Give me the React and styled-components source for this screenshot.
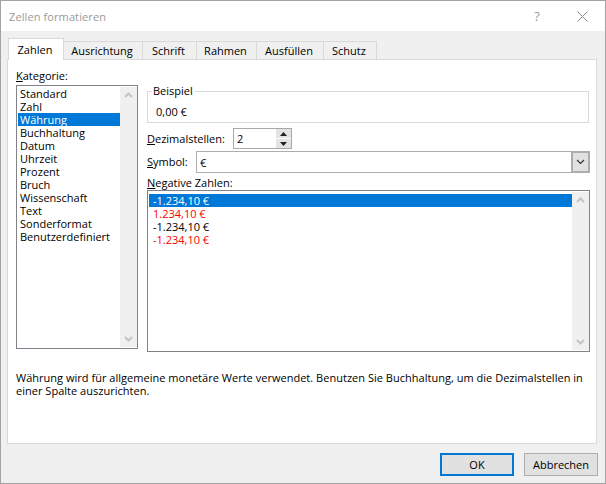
import React from "react";
import styled, { createGlobalStyle } from "styled-components";

const Global = createGlobalStyle`
  html, body { margin: 0; padding: 0; background: #f0f0f0; }
  * { box-sizing: border-box; }
`;

const Dialog = styled.div`
  width: 606px;
  height: 484px;
  display: flex;
  flex-direction: column;
  background: #f0f0f0;
  border: 1px solid #a3a3a3;
  font-family: "Open Sans", "Liberation Sans", sans-serif;
  font-size: 11px;
  color: #000;
  overflow: hidden;
`;

const TitleBar = styled.div`
  height: 30px;
  flex: none;
  background: #fff;
  display: flex;
  align-items: center;
  padding-left: 8px;
  color: #9a9a9a;
`;

const Title = styled.span`
  flex: 1;
  letter-spacing: 0.1px;
`;

const TitleButton = styled.div`
  width: 20px;
  margin-right: ${(p) => p.$gap}px;
  display: flex;
  justify-content: center;
  font-size: 13px;
  color: #9a9a9a;
`;

const TabRow = styled.div`
  flex: none;
  height: 28px;
  padding: 7px 0 0 7px;
  display: flex;
  align-items: flex-end;
  position: relative;
  z-index: 1;
`;

const Tab = styled.div`
  width: ${(p) => p.$w}px;
  height: ${(p) => (p.$active ? 22 : 18)}px;
  margin-bottom: ${(p) => (p.$active ? -1 : 0)}px;
  margin-left: ${(p) => (p.$first ? 0 : -1)}px;
  padding: 0 2px 1px 0;
  background: ${(p) => (p.$active ? "#fff" : "#f0f0f0")};
  border: 1px solid #d9d9d9;
  border-bottom: none;
  display: flex;
  align-items: center;
  justify-content: center;
`;

const Panel = styled.div`
  width: 590px;
  height: 385px;
  margin-left: 6px;
  flex: none;
  background: #fff;
  border: 1px solid #d9d9d9;
  padding: 8px 6px 0 8px;
  display: flex;
  flex-direction: column;
`;

const Columns = styled.div`
  display: flex;
  gap: 9px;
  height: 284px;
  flex: none;
`;

const LeftColumn = styled.div`
  width: 122px;
  flex: none;
  display: flex;
  flex-direction: column;
  padding-bottom: 3px;
`;

const RightColumn = styled.div`
  flex: 1;
  padding-top: 16px;
  display: flex;
  flex-direction: column;
`;

const Label = styled.div`
  line-height: 16px;
  height: ${(p) => p.$h || 16}px;
  padding-top: ${(p) => p.$top || 0}px;
  white-space: nowrap;

  u {
    text-decoration: underline;
    text-underline-offset: 1px;
  }
`;

const ListBox = styled.div`
  flex: ${(p) => (p.$grow ? 1 : "none")};
  height: ${(p) => (p.$h ? `${p.$h}px` : "auto")};
  border: 1px solid #82828a;
  background: #fff;
  display: flex;
  padding: 1px 0 1px 1px;
  min-height: 0;
`;

const Items = styled.div`
  flex: 1;
  padding-top: ${(p) => p.$top}px;
`;

const Item = styled.div`
  height: 13px;
  line-height: 13px;
  padding-left: ${(p) => p.$indent}px;
  white-space: nowrap;
  background: ${(p) => (p.$selected ? "#0078d7" : "transparent")};
  color: ${(p) => (p.$selected ? "#fff" : p.$red ? "#f00" : "#000")};
`;

const ScrollBar = styled.div`
  width: 17px;
  flex: none;
  background: #f0f0f0;
  display: flex;
  flex-direction: column;
  justify-content: space-between;
  align-items: center;
  padding: 5px 0;
`;

const Example = styled.fieldset`
  margin: 0;
  padding: 0 0 0 8px;
  height: 39px;
  width: 442px;
  flex: none;
  border: 1px solid #d9d9d9;

  legend {
    padding: 0 2px 0 1px;
    margin-left: -4px;
    line-height: 14px;
  }
`;

const ExampleValue = styled.div`
  line-height: 16px;
  margin-top: 6px;
`;

const Row = styled.div`
  display: flex;
  align-items: center;
  height: ${(p) => p.$h}px;
  flex: none;
  padding-top: ${(p) => p.$top || 0}px;
`;

const SpinBox = styled.div`
  width: 59px;
  height: 21px;
  margin-left: 8px;
  border: 1px solid #a9a9a9;
  display: flex;
  align-items: center;
  padding-left: 3px;
`;

const SpinValue = styled.span`
  flex: 1;
`;

const SpinButtons = styled.div`
  width: 15px;
  height: 19px;
  display: flex;
  flex-direction: column;
  gap: 1px;
`;

const SpinButton = styled.div`
  flex: 1;
  background: #e4e4e4;
  display: flex;
  align-items: center;
  justify-content: center;
`;

const Select = styled.div`
  width: 394px;
  height: 22px;
  margin-left: auto;
  border: 1px solid #adadad;
  display: flex;
  align-items: center;
  padding-left: 3px;
`;

const SelectValue = styled.span`
  flex: 1;
`;

const SelectArrow = styled.div`
  width: 18px;
  height: 20px;
  background: #e1e1e1;
  border: 1px solid #adadad;
  border-left-width: 2px;
  display: flex;
  align-items: center;
  justify-content: center;
`;

const Description = styled.div`
  margin-top: 19px;
  line-height: 13px;
  width: 574px;
  letter-spacing: 0.02px;
`;

const Footer = styled.div`
  flex: 1;
  display: flex;
  justify-content: flex-end;
  gap: 10px;
  padding: 9px 7px 0 0;
`;

const Button = styled.div`
  width: 74px;
  height: 23px;
  background: #e1e1e1;
  border: ${(p) => (p.$primary ? "2px solid #0078d7" : "1px solid #adadad")};
  display: flex;
  align-items: center;
  justify-content: center;
`;

const Chevron = ({ up, color = "#c4c4c4", sw = 2 }) => (
  <svg width="9" height="6" viewBox="0 0 9 6">
    <path d={up ? "M1 5 L4.5 1.5 L8 5" : "M1 1 L4.5 4.5 L8 1"} fill="none" stroke={color} strokeWidth={sw} />
  </svg>
);

const Triangle = ({ up }) => (
  <svg width="7" height="4" viewBox="0 0 7 4">
    <path d={up ? "M3.5 0 L7 4 L0 4 Z" : "M0 0 L7 0 L3.5 4 Z"} fill="#222" />
  </svg>
);

const tabs = [
  ["Zahlen", 56],
  ["Ausrichtung", 80],
  ["Schrift", 55],
  ["Rahmen", 61],
  ["Ausfüllen", 68],
  ["Schutz", 54],
];

const categories = [
  "Standard", "Zahl", "Währung", "Buchhaltung", "Datum", "Uhrzeit", "Prozent",
  "Bruch", "Wissenschaft", "Text", "Sonderformat", "Benutzerdefiniert",
];

const negatives = [
  { text: "-1.234,10 €", selected: true },
  { text: "1.234,10 €", red: true },
  { text: "-1.234,10 €" },
  { text: "-1.234,10 €", red: true },
];

const App = () => (
  <>
    <Global />
    <Dialog>
      <TitleBar>
        <Title>Zellen formatieren</Title>
        <TitleButton $gap={25}>?</TitleButton>
        <TitleButton $gap={13}>
          <svg width="11" height="11" viewBox="0 0 11 11">
            <path d="M0.5 0.5 L10.5 10.5 M10.5 0.5 L0.5 10.5" stroke="#8a8a8a" strokeWidth="1" fill="none" />
          </svg>
        </TitleButton>
      </TitleBar>
      <TabRow>
        {tabs.map(([name, w], i) => (
          <Tab key={name} $w={w} $active={i === 0} $first={i === 0}>{name}</Tab>
        ))}
      </TabRow>
      <Panel>
        <Columns>
          <LeftColumn>
            <Label $h={17}><u>K</u>ategorie:</Label>
            <ListBox $grow>
              <Items $top={0}>
                {categories.map((c) => (
                  <Item key={c} $indent={2} $selected={c === "Währung"}>{c}</Item>
                ))}
              </Items>
              <ScrollBar>
                <Chevron up />
                <Chevron />
              </ScrollBar>
            </ListBox>
          </LeftColumn>
          <RightColumn>
            <Example>
              <legend>Beispiel</legend>
              <ExampleValue>0,00 €</ExampleValue>
            </Example>
            <Row $h={28} $top={3}>
              <Label><u>D</u>ezimalstellen:</Label>
              <SpinBox>
                <SpinValue>2</SpinValue>
                <SpinButtons>
                  <SpinButton><Triangle up /></SpinButton>
                  <SpinButton><Triangle /></SpinButton>
                </SpinButtons>
              </SpinBox>
            </Row>
            <Row $h={22}>
              <Label><u>S</u>ymbol:</Label>
              <Select>
                <SelectValue>€</SelectValue>
                <SelectArrow><Chevron color="#333" sw={1.2} /></SelectArrow>
              </Select>
            </Row>
            <Label $h={17} $top={2}><u>N</u>egative Zahlen:</Label>
            <ListBox $h={162}>
              <Items $top={2}>
                {negatives.map((n, i) => (
                  <Item key={i} $indent={4} $selected={n.selected} $red={n.red}>{n.text}</Item>
                ))}
              </Items>
              <ScrollBar>
                <Chevron up />
                <Chevron />
              </ScrollBar>
            </ListBox>
          </RightColumn>
        </Columns>
        <Description>
          Währung wird für allgemeine monetäre Werte verwendet. Benutzen Sie Buchhaltung, um die Dezimalstellen in einer Spalte auszurichten.
        </Description>
      </Panel>
      <Footer>
        <Button $primary>OK</Button>
        <Button>Abbrechen</Button>
      </Footer>
    </Dialog>
  </>
);

export default App;
